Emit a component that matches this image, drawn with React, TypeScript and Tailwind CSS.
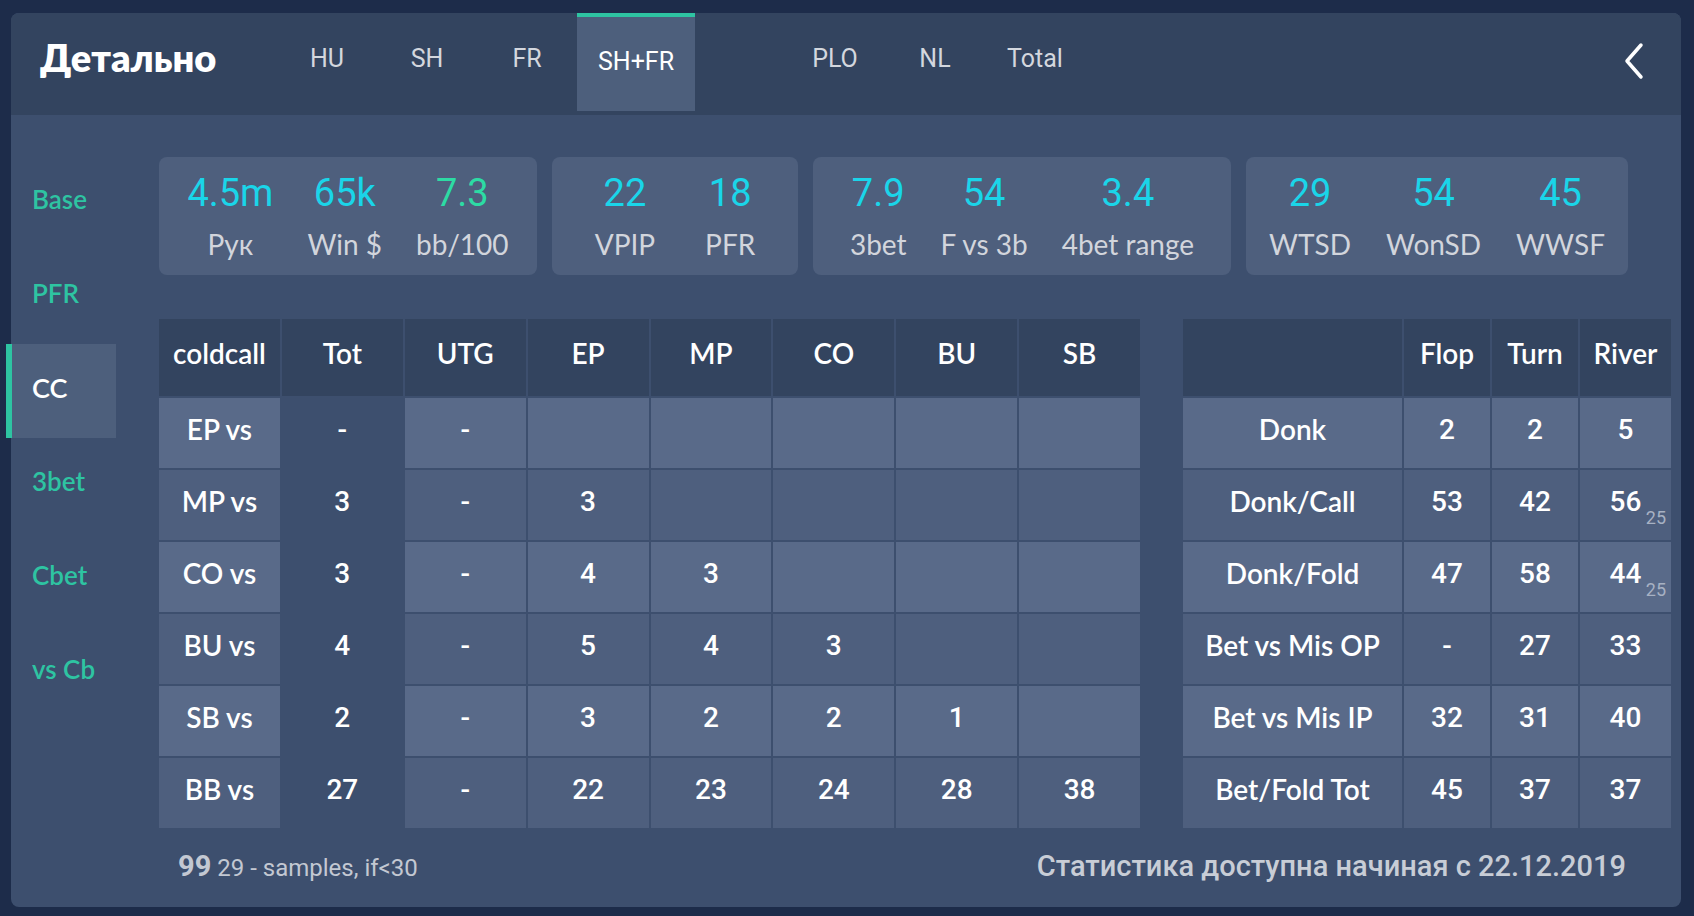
import React from 'react';

const LATO = { fontFamily: 'Lato, "Noto Sans", sans-serif' };
const ROBOTO = { fontFamily: 'Roboto, "Noto Sans", sans-serif' };

const tabs = [
  { label: 'HU', w: 'w-[100px]' },
  { label: 'SH', w: 'w-[100px]' },
  { label: 'FR', w: 'w-[100px]' },
  { label: 'SH+FR', w: 'w-[118px]', active: true },
  { label: '', w: 'w-[90px]' },
  { label: 'PLO', w: 'w-[100px]' },
  { label: 'NL', w: 'w-[100px]' },
  { label: 'Total', w: 'w-[100px]' },
];

const side = ['Base', 'PFR', 'CC', '3bet', 'Cbet', 'vs Cb'];

const cards = [
  {
    w: 'w-[378px]',
    gap: 'gap-[34px]',
    items: [
      { v: '4.5m', l: 'Рук' },
      { v: '65k', l: 'Win $' },
      { v: '7.3', l: 'bb/100', green: true },
    ],
  },
  {
    w: 'w-[246px]',
    gap: 'gap-[50px]',
    items: [
      { v: '22', l: 'VPIP' },
      { v: '18', l: 'PFR' },
    ],
  },
  {
    w: 'w-[418px]',
    gap: 'gap-[34px]',
    items: [
      { v: '7.9', l: '3bet' },
      { v: '54', l: 'F vs 3b' },
      { v: '3.4', l: '4bet range' },
    ],
  },
  {
    w: 'w-[382px]',
    gap: 'gap-[35px]',
    items: [
      { v: '29', l: 'WTSD' },
      { v: '54', l: 'WonSD' },
      { v: '45', l: 'WWSF' },
    ],
  },
];

const headL = ['coldcall', 'Tot', 'UTG', 'EP', 'MP', 'CO', 'BU', 'SB'];
const rowsL = [
  ['EP vs', '-', '-', '', '', '', '', ''],
  ['MP vs', '3', '-', '3', '', '', '', ''],
  ['CO vs', '3', '-', '4', '3', '', '', ''],
  ['BU vs', '4', '-', '5', '4', '3', '', ''],
  ['SB vs', '2', '-', '3', '2', '2', '1', ''],
  ['BB vs', '27', '-', '22', '23', '24', '28', '38'],
];

const headR = ['', 'Flop', 'Turn', 'River'];
const rowsR: { l: string; v: string[]; sub?: string }[] = [
  { l: 'Donk', v: ['2', '2', '5'] },
  { l: 'Donk/Call', v: ['53', '42', '56'], sub: '25' },
  { l: 'Donk/Fold', v: ['47', '58', '44'], sub: '25' },
  { l: 'Bet vs Mis OP', v: ['-', '27', '33'] },
  { l: 'Bet vs Mis IP', v: ['32', '31', '40'] },
  { l: 'Bet/Fold Tot', v: ['45', '37', '37'] },
];

function rowBg(i: number) {
  return i % 2 === 0 ? 'bg-[#596a89]' : 'bg-[#4e5f7e]';
}

export default function App() {
  return (
    <div className="w-[1694px] h-[916px] bg-[#1d2c4a] pt-[13px] pl-[11px] pr-[13px] overflow-hidden">
      <div className="w-[1670px] h-[894px] bg-[#3d4f6e] rounded-lg flex flex-col">
        {/* header */}
        <div className="h-[102px] bg-[#33445f] rounded-t-lg flex items-start relative">
          <div
            className="pl-[29px] w-[266px] pt-[24px] text-[38px] leading-[40px] font-extrabold text-white"
            style={LATO}
          >
            Детально
          </div>
          {tabs.map((t, i) =>
            t.active ? (
              <div
                key={i}
                className={`${t.w} h-[98px] bg-[#4d5f7c] border-t-4 border-[#2ec4a2] text-white text-center pt-[30px] text-[25px] leading-[30px]`}
                style={ROBOTO}
              >
                {t.label}
              </div>
            ) : (
              <div
                key={i}
                className={`${t.w} text-[#d3d7de] text-center pt-[31px] text-[25px] leading-[30px]`}
                style={ROBOTO}
              >
                {t.label}
              </div>
            )
          )}
          <div className="ml-auto mr-[36px] mt-[29px]">
            <svg width="22" height="38" viewBox="0 0 22 38" fill="none">
              <polyline points="18,3 4,19 18,35" stroke="white" strokeWidth="3.5" strokeLinecap="round" strokeLinejoin="round" />
            </svg>
          </div>
        </div>

        {/* body */}
        <div className="flex-1 flex">
          <div className="w-[148px] pt-[38px] flex flex-col" style={LATO}>
            {side.map((s) =>
              s === 'CC' ? (
                <div
                  key={s}
                  className="-ml-[5px] mt-[3px] -mb-[3px] w-[110px] h-[94px] bg-[#4d5f7c] border-l-[6px] border-[#2ec4a2] flex items-center pl-[20px] pb-[6px] text-[27px] font-semibold text-white"
                >
                  {s}
                </div>
              ) : (
                <div
                  key={s}
                  className="-ml-[5px] w-[110px] h-[94px] flex items-center pl-[26px] pb-[2px] text-[26px] font-semibold text-[#2ec4a2]"
                >
                  {s}
                </div>
              )
            )}
          </div>

          <div className="flex-1 flex flex-col pt-[42px]">
            {/* stat cards */}
            <div className="flex gap-[15px] h-[118px]">
              {cards.map((c, ci) => (
                <div key={ci} className={`${c.w} bg-[#4e5f7d] rounded-lg flex justify-center ${c.gap} pt-[16px]`}>
                  {c.items.map((it) => (
                    <div key={it.l} className="flex flex-col items-center">
                      <div
                        className={`text-[38px] leading-[40px] ${it.green ? 'text-[#2ddba4]' : 'text-[#1ad5e9]'}`}
                        style={ROBOTO}
                      >
                        {it.v}
                      </div>
                      <div className="mt-[15px] text-[28px] leading-[32px] text-[#d2d5dc]" style={LATO}>
                        {it.l}
                      </div>
                    </div>
                  ))}
                </div>
              ))}
            </div>

            {/* tables */}
            <div className="flex mt-[44px] gap-[43px]">
              <div className="w-[981px] grid grid-cols-8 gap-[2px] text-white text-[28px] font-semibold" style={LATO}>
                {headL.map((h) => (
                  <div key={h} className="h-[77px] bg-[#33445f] flex items-center justify-center pb-[9px]">
                    {h}
                  </div>
                ))}
                {rowsL.map((r, ri) =>
                  r.map((c, ci) => (
                    <div
                      key={ri + '-' + ci}
                      className={`h-[70px] flex items-center justify-center ${ci === 0 ? 'pb-[8px]' : 'pb-[6px] font-medium'} ${ci === 1 ? 'bg-[#3d4f6e]' : rowBg(ri)}`}
                      style={ci === 0 ? LATO : ROBOTO}
                    >
                      {c}
                    </div>
                  ))
                )}
              </div>

              <div className="w-[488px] grid grid-cols-[219px_86px_86px_91px] gap-[2px] text-white text-[28px] font-semibold" style={LATO}>
                {headR.map((h, i) => (
                  <div key={i} className="h-[77px] bg-[#33445f] flex items-center justify-center pb-[9px]">
                    {h}
                  </div>
                ))}
                {rowsR.map((r, ri) => (
                  <React.Fragment key={r.l}>
                    <div className={`h-[70px] flex items-center justify-center pb-[8px] ${rowBg(ri)}`}>{r.l}</div>
                    {r.v.map((v, vi) => (
                      <div
                        key={vi}
                        className={`h-[70px] relative flex items-center justify-center pb-[6px] font-medium ${rowBg(ri)}`}
                        style={ROBOTO}
                      >
                        {v}
                        {vi === 2 && r.sub ? (
                          <span className="absolute right-[5px] bottom-[13px] text-[18px] leading-none font-normal text-[#a7b1c3]">
                            {r.sub}
                          </span>
                        ) : null}
                      </div>
                    ))}
                  </React.Fragment>
                ))}
              </div>
            </div>

            {/* footer */}
            <div className="h-[78px] flex items-center justify-between pl-[19px] pr-[55px]" style={ROBOTO}>
              <div className="flex items-baseline text-[#c3c8d2]">
                <span className="text-[29px] font-bold">99</span>
                <span className="ml-[6px] text-[24px]">29 - samples, if&lt;30</span>
              </div>
              <div className="text-[29px] font-medium text-[#c8cdd6]">Статистика доступна начиная с 22.12.2019</div>
            </div>
          </div>
        </div>
      </div>
    </div>
  );
}
